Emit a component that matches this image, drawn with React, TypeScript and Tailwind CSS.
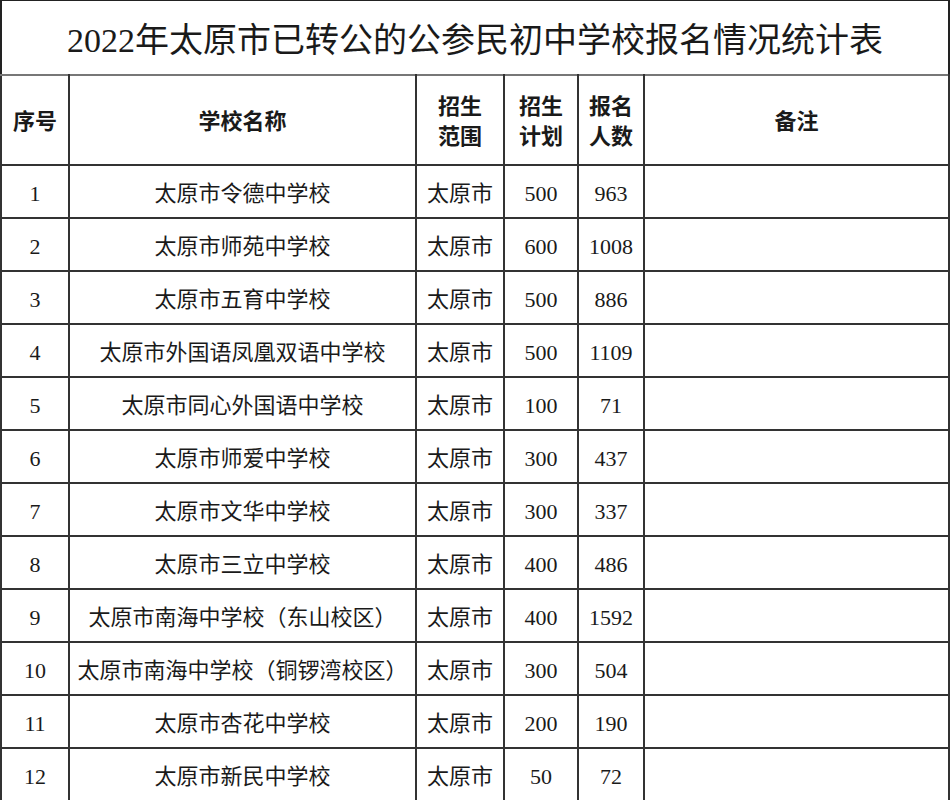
const rows: [string, string, string, string, string][] = [
  ["1", "太原市令德中学校", "太原市", "500", "963"],
  ["2", "太原市师苑中学校", "太原市", "600", "1008"],
  ["3", "太原市五育中学校", "太原市", "500", "886"],
  ["4", "太原市外国语凤凰双语中学校", "太原市", "500", "1109"],
  ["5", "太原市同心外国语中学校", "太原市", "100", "71"],
  ["6", "太原市师爱中学校", "太原市", "300", "437"],
  ["7", "太原市文华中学校", "太原市", "300", "337"],
  ["8", "太原市三立中学校", "太原市", "400", "486"],
  ["9", "太原市南海中学校（东山校区）", "太原市", "400", "1592"],
  ["10", "太原市南海中学校（铜锣湾校区）", "太原市", "300", "504"],
  ["11", "太原市杏花中学校", "太原市", "200", "190"],
  ["12", "太原市新民中学校", "太原市", "50", "72"],
];

const cell = "border-2 border-[#333] text-center align-middle p-0";

export default function App() {
  return (
    <div
      className="w-[950px] h-[800px] overflow-hidden bg-white text-[#1a1a1a]"
      style={{ fontFamily: '"Liberation Serif", "Noto Sans CJK SC", serif' }}
    >
      <div className="h-[76px] pt-[6px] flex items-center justify-center border-t border-l-2 border-r-2 border-b-2 border-t-[#222] border-l-[#222] border-r-[#222] border-b-[#777] text-[34px]">
        2022年太原市已转公的公参民初中学校报名情况统计表
      </div>
      <table className="table-fixed border-collapse w-[950px] -mt-[2px]">
        <colgroup>
          <col className="w-[68px]" />
          <col className="w-[347px]" />
          <col className="w-[88px]" />
          <col className="w-[74px]" />
          <col className="w-[66px]" />
          <col />
        </colgroup>
        <thead>
          <tr className="h-[90px] text-[22px] font-bold leading-[30px]">
            <th className={`${cell} border-t-[#777] pt-[4px]`}>序号</th>
            <th className={`${cell} border-t-[#777] pt-[4px]`}>学校名称</th>
            <th className={`${cell} border-t-[#777] pt-[4px]`}>
              招生
              <br />
              范围
            </th>
            <th className={`${cell} border-t-[#777] pt-[4px]`}>
              招生
              <br />
              计划
            </th>
            <th className={`${cell} border-t-[#777] pt-[4px]`}>
              报名
              <br />
              人数
            </th>
            <th className={`${cell} border-t-[#777] pt-[4px]`}>备注</th>
          </tr>
        </thead>
        <tbody>
          {rows.map(([no, name, area, plan, count]) => (
            <tr key={no} className="h-[53px] text-[22px]">
              <td className={`${cell} pt-[3px]`}>{no}</td>
              <td className={`${cell} pt-[3px] whitespace-nowrap`}>{name}</td>
              <td className={`${cell} pt-[3px]`}>{area}</td>
              <td className={`${cell} pt-[3px]`}>{plan}</td>
              <td className={`${cell} pt-[3px]`}>{count}</td>
              <td className={cell}></td>
            </tr>
          ))}
        </tbody>
      </table>
    </div>
  );
}
